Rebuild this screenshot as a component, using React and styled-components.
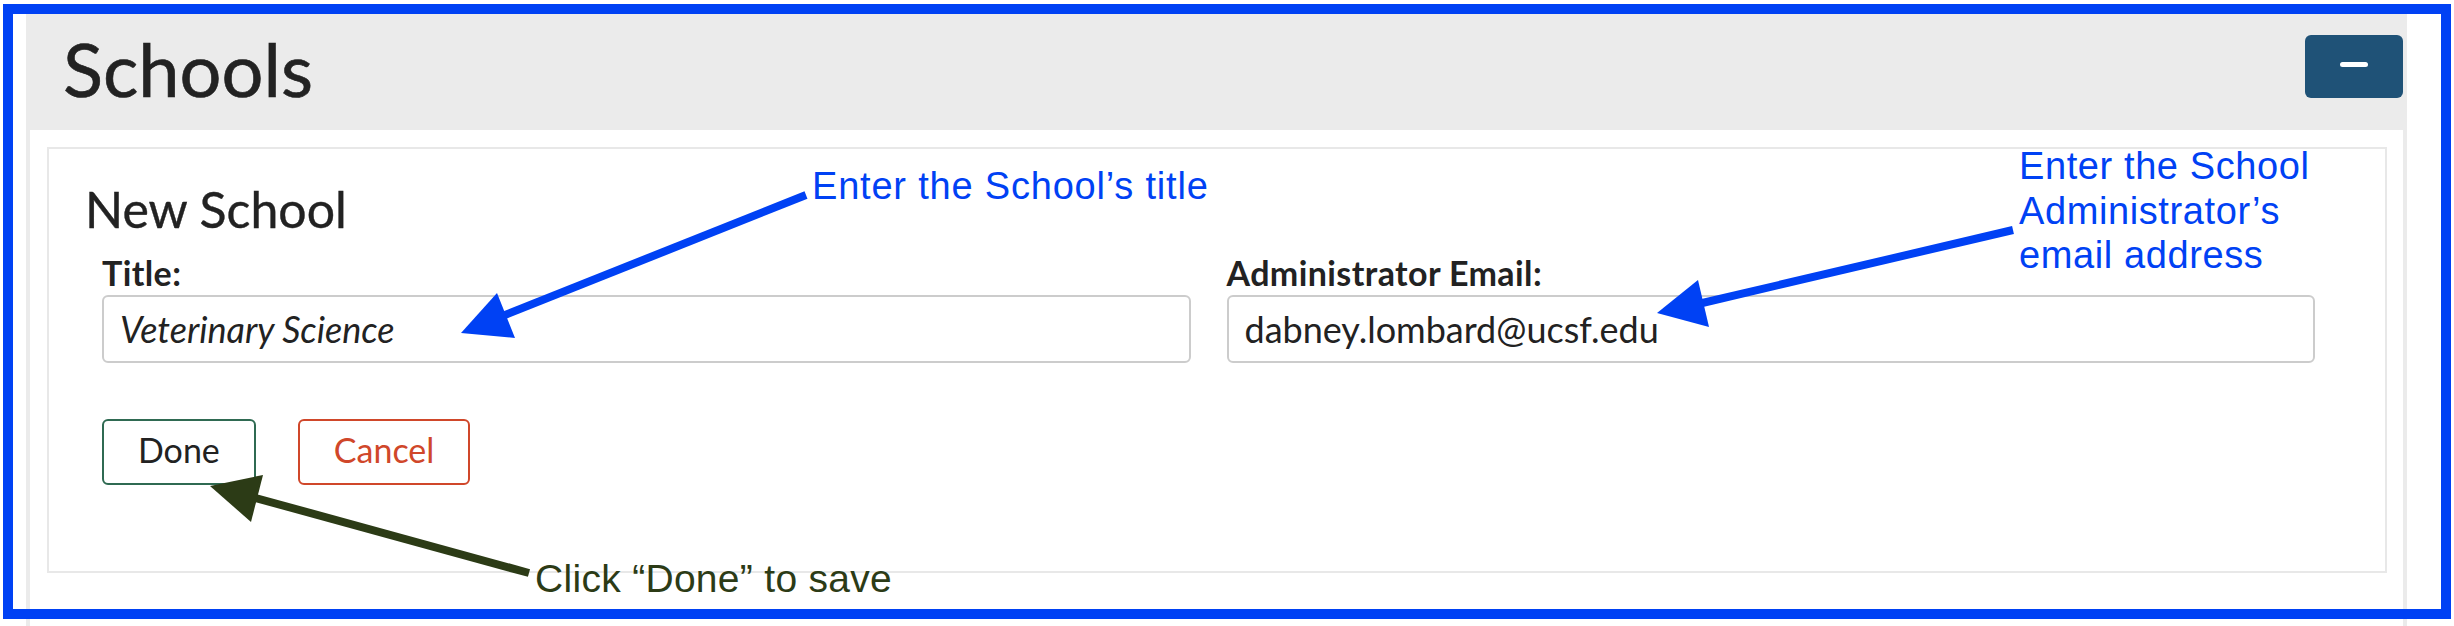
import React from "react";
import styled, { createGlobalStyle } from "styled-components";

const Global = createGlobalStyle`
  html, body { margin: 0; padding: 0; background: #ffffff; }
  body { font-family: Lato, "Noto Sans", sans-serif; color: #222222; }
  * { box-sizing: border-box; }
`;

const Page = styled.div`
  position: relative;
  width: 2454px;
  height: 626px;
  overflow: hidden;
  background: #ffffff;
  padding-top: 4px;
`;

const Panel = styled.section`
  margin-left: 26px;
  width: 2381px;
  height: 700px;
  border-left: 4px solid #ebebeb;
  border-right: 4px solid #ebebeb;
  background: #ffffff;
`;

const Header = styled.header`
  display: flex;
  align-items: flex-start;
  justify-content: space-between;
  height: 126px;
  background: #ebebeb;
  padding-left: 33px;
`;

const PageTitle = styled.h1`
  margin: 21px 0 0;
  font-family: Lato, sans-serif;
  font-weight: 400;
  font-size: 74px;
  line-height: 88px;
  color: #222222;
  -webkit-text-stroke: 0.6px #222222;
`;

const CollapseButton = styled.button`
  margin-top: 31px;
  width: 98px;
  height: 63px;
  border: none;
  border-radius: 6px;
  background: #1f5277;
  display: flex;
  align-items: center;
  justify-content: center;
  padding: 0 0 4px;
  cursor: pointer;
`;

const MinusBar = styled.span`
  display: block;
  width: 28px;
  height: 5px;
  border-radius: 3px;
  background: #ffffff;
`;

const Body = styled.div`
  padding: 17px 16px 0 17px;
`;

const Card = styled.div`
  border: 2px solid #e8e8e8;
  padding: 30px 0 86px 36px;
`;

const CardTitle = styled.h2`
  margin: 0 0 14px;
  font-family: Lato, sans-serif;
  font-weight: 400;
  font-size: 50px;
  line-height: 60px;
  color: #222222;
  -webkit-text-stroke: 0.4px #222222;
`;

const FieldGrid = styled.div`
  display: grid;
  grid-template-columns: 1fr 1fr;
  column-gap: 36px;
  margin: 0 70px 0 17px;
`;

const Field = styled.div`
  display: flex;
  flex-direction: column;
`;

const Label = styled.label`
  font-family: Lato, sans-serif;
  font-weight: 700;
  font-size: 34px;
  line-height: 40px;
  letter-spacing: 0.4px;
  color: #222222;
  margin-bottom: 2px;
`;

const Input = styled.input`
  height: 68px;
  width: 100%;
  border: 2px solid #cccccc;
  border-radius: 6px;
  padding: 0 16px;
  font-family: Lato, sans-serif;
  font-size: 36px;
  font-style: ${(p) => (p.$italic ? "italic" : "normal")};
  color: #222222;
  background: #ffffff;
  outline: none;
`;

const Actions = styled.div`
  display: flex;
  gap: 42px;
  margin: 56px 0 0 17px;
`;

const ActionButton = styled.button`
  height: 66px;
  padding: 0 34px 4px;
  border: 2px solid ${(p) => p.$border};
  border-radius: 6px;
  background: #ffffff;
  color: ${(p) => p.$color};
  font-family: Lato, sans-serif;
  font-size: 34px;
  line-height: 58px;
  cursor: pointer;
`;

const Frame = styled.div`
  position: absolute;
  left: 3px;
  top: 4px;
  width: 2448px;
  height: 615px;
  border: 10px solid #0041f4;
  pointer-events: none;
`;

const Overlay = styled.svg`
  position: absolute;
  left: 0;
  top: 0;
  pointer-events: none;
`;

const Note = styled.div`
  position: absolute;
  left: ${(p) => p.$x}px;
  top: ${(p) => p.$y}px;
  font-family: "Liberation Sans", Arial, sans-serif;
  font-size: ${(p) => p.$size}px;
  line-height: ${(p) => p.$lh}px;
  letter-spacing: ${(p) => p.$ls || 0}px;
  color: ${(p) => p.$color};
  white-space: nowrap;
`;

const BLUE = "#0041f4";
const GREEN = "#2c3b16";

export default function App() {
  return (
    <>
      <Global />
      <Page>
        <Panel>
          <Header>
            <PageTitle>Schools</PageTitle>
            <CollapseButton aria-label="Collapse">
              <MinusBar />
            </CollapseButton>
          </Header>
          <Body>
            <Card>
              <CardTitle>New School</CardTitle>
              <FieldGrid>
                <Field>
                  <Label>Title:</Label>
                  <Input $italic defaultValue="Veterinary Science" />
                </Field>
                <Field>
                  <Label>Administrator Email:</Label>
                  <Input defaultValue="dabney.lombard@ucsf.edu" />
                </Field>
              </FieldGrid>
              <Actions>
                <ActionButton $border="#2f6a52" $color="#222222">Done</ActionButton>
                <ActionButton $border="#d0472a" $color="#d0472a">Cancel</ActionButton>
              </Actions>
            </Card>
          </Body>
        </Panel>

        <Frame />

        <Overlay width="2454" height="626" viewBox="0 0 2454 626">
          <line x1="806" y1="195" x2="500" y2="317" stroke={BLUE} strokeWidth="8" />
          <polygon points="461,333 497,293 515,338" fill={BLUE} />
          <line x1="2013" y1="230" x2="1698" y2="304" stroke={BLUE} strokeWidth="8" />
          <polygon points="1657,313 1698,280 1709,327" fill={BLUE} />
          <line x1="529" y1="573" x2="252" y2="497" stroke={GREEN} strokeWidth="8" />
          <polygon points="210,486 263,475 251,522" fill={GREEN} />
        </Overlay>

        <Note $x={812} $y={164} $size={38} $lh={44} $ls={0.8} $color={BLUE}>
          Enter the School’s title
        </Note>
        <Note $x={2019} $y={144} $size={38} $lh={44.5} $ls={0.6} $color={BLUE}>
          Enter the School
          <br />
          Administrator’s
          <br />
          email address
        </Note>
        <Note $x={535} $y={557} $size={39} $lh={44} $ls={0.3} $color={GREEN}>
          Click “Done” to save
        </Note>
      </Page>
    </>
  );
}
